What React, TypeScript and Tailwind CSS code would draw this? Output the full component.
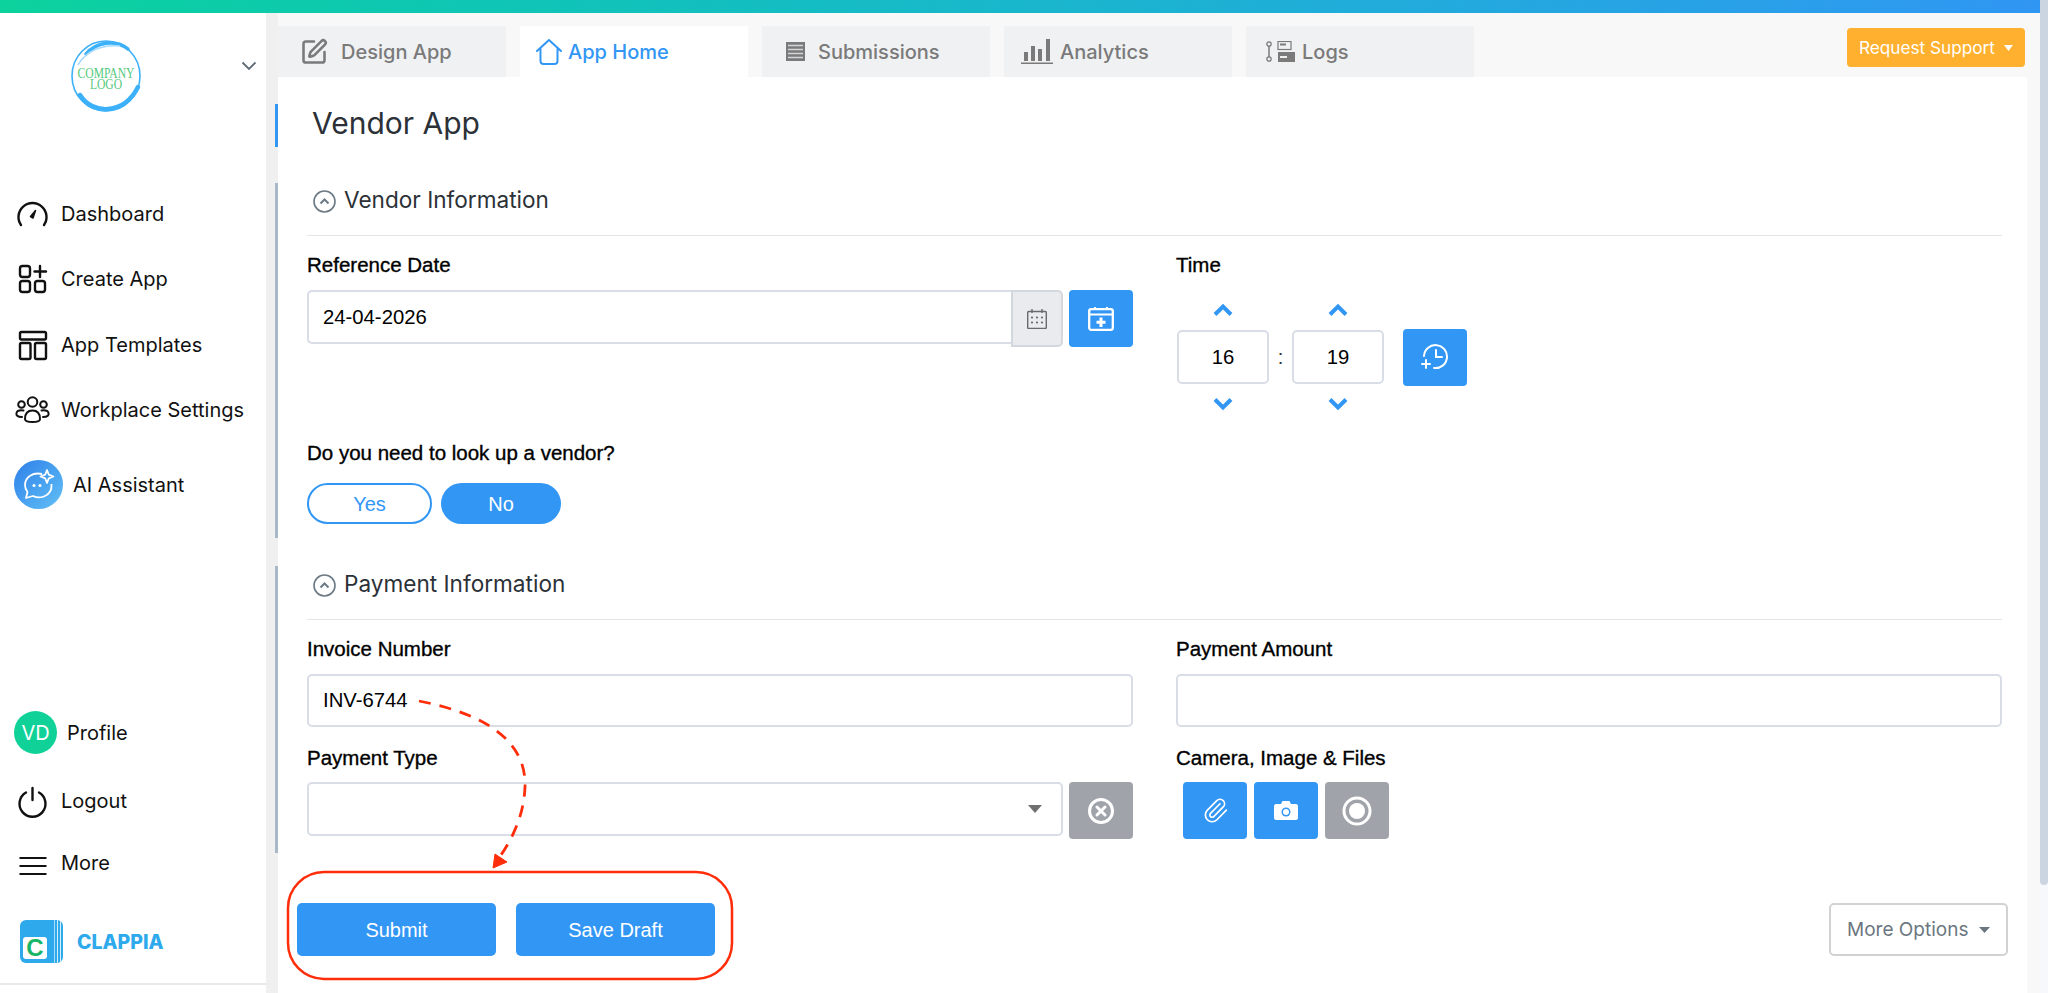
import React from "react";
import { SquarePen, Paperclip } from "lucide-react";

const helv = "font-['Liberation_Sans',Arial,sans-serif]";

function Chevron({ up }: { up?: boolean }) {
  return (
    <svg width="20" height="14" viewBox="0 0 20 14" fill="none" stroke="#3296f5" strokeWidth="4">
      <path d={up ? "M2 11.5 L10 3.5 L18 11.5" : "M2 2.5 L10 10.5 L18 2.5"} />
    </svg>
  );
}

function Caret({ color, w = 14, h = 8 }: { color: string; w?: number; h?: number }) {
  return (
    <svg width={w} height={h} viewBox="0 0 14 8" preserveAspectRatio="none" className="shrink-0">
      <path d="M0 0 H14 L7 8 Z" fill={color} />
    </svg>
  );
}

function NavIcon({ children }: { children: React.ReactNode }) {
  return (
    <svg width="32" height="32" viewBox="0 0 32 32" fill="none" stroke="#111" strokeWidth="2.4" strokeLinecap="round" strokeLinejoin="round" className="overflow-visible shrink-0">
      {children}
    </svg>
  );
}

function NavRow({ icon, label, className }: { icon: React.ReactNode; label: string; className: string }) {
  return (
    <div className={`flex items-center pl-[17px] gap-[12px] text-[20px] text-[#111] ${className}`}>
      {icon}
      <span>{label}</span>
    </div>
  );
}

function Sidebar() {
  return (
    <aside className="w-[266px] shrink-0 bg-white flex flex-col">
      {/* logo block */}
      <div className="h-[168px] relative">
        <div className="flex items-start pl-[70px] pt-[26px]">
          <svg width="74" height="74" viewBox="0 0 74 74" fill="none">
            <ellipse cx="36" cy="37" rx="34" ry="35" stroke="#3cb0f8" strokeWidth="1.6" />
            <path d="M10 56 C22 76 54 76 68 48" stroke="#3cb0f8" strokeWidth="4.5" strokeLinecap="round" />
            <path d="M16 15 C26 3 46 0 58 10" stroke="#3cb0f8" strokeWidth="3.5" strokeLinecap="round" />
            <path d="M8 26 C16 12 32 5 50 7" stroke="#a5dafb" strokeWidth="1.5" />
            <text transform="translate(36 39) scale(0.8 1)" textAnchor="middle" fontSize="14.5" fontFamily="'Liberation Serif',serif" fill="#55c97c">COMPANY</text>
            <text transform="translate(36 50) scale(0.8 1)" textAnchor="middle" fontSize="14.5" fontFamily="'Liberation Serif',serif" fill="#55c97c">LOGO</text>
          </svg>
          <svg width="16" height="10" viewBox="0 0 16 10" fill="none" stroke="#5f6b76" strokeWidth="1.8" className="ml-[97px] mt-[22px]">
            <path d="M1.5 1.5 L8 8 L14.5 1.5" />
          </svg>
        </div>
      </div>

      <NavRow
        className="h-[65.5px]"
        label="Dashboard"
        icon={
          <NavIcon>
            <path d="M4 27 A14 14 0 1 1 27 27" />
            <path d="M13.5 18.5 L18.5 12.5 L16 20 Z" fill="#111" strokeWidth="1.5" />
          </NavIcon>
        }
      />
      <NavRow
        className="h-[65.5px]"
        label="Create App"
        icon={
          <NavIcon>
            <rect x="3" y="3" width="10" height="11" rx="2.5" />
            <rect x="3" y="18" width="10" height="11" rx="2.5" />
            <rect x="18" y="18" width="10" height="11" rx="2.5" />
            <path d="M23 3 V14 M17.5 8.5 H29" />
          </NavIcon>
        }
      />
      <NavRow
        className="h-[65.5px]"
        label="App Templates"
        icon={
          <NavIcon>
            <rect x="3" y="3" width="26" height="7.5" rx="1.5" />
            <rect x="3" y="14" width="10.5" height="16" rx="1.5" />
            <rect x="18" y="14" width="11" height="16" rx="1.5" />
          </NavIcon>
        }
      />
      <NavRow
        className="h-[65.5px]"
        label="Workplace Settings"
        icon={
          <NavIcon>
            <circle cx="15.5" cy="8" r="4.8" strokeWidth="2" />
            <circle cx="4.5" cy="10.5" r="3.3" strokeWidth="2" />
            <circle cx="26.5" cy="10.5" r="3.3" strokeWidth="2" />
            <path d="M8 25 C8 19 11 16.5 15.5 16.5 C20 16.5 23 19 23 25 C23 29 8 29 8 25 Z" strokeWidth="2" />
            <path d="M5 23 C0 23 -1 21 -0.5 19 C0 17 2.5 16 6.5 16.5" strokeWidth="2" />
            <path d="M26 23 C31 23 32 21 31.5 19 C31 17 28.5 16 24.5 16.5" strokeWidth="2" />
          </NavIcon>
        }
      />
      <div className="flex items-center pl-[14px] gap-[10px] mt-[17px] text-[20px] text-[#111]">
        <div className="w-[49px] h-[49px] rounded-full bg-gradient-to-br from-[#2f7fe8] to-[#63c0f6] flex items-center justify-center">
          <svg width="36" height="36" viewBox="0 0 36 36" fill="none" stroke="white" strokeWidth="1.8" strokeLinejoin="round">
            <path d="M21 7 C12 5 4 10 4 18 C4 21 5 23 6.5 25 L5 31 L12 29 C15 30.5 19 31 23 29.5 C28 27.5 31 23 30.5 17" />
            <path d="M26 3 L27.8 7.7 L32.5 9.5 L27.8 11.3 L26 16 L24.2 11.3 L19.5 9.5 L24.2 7.7 Z" />
            <circle cx="13" cy="18.5" r="1.5" fill="white" stroke="none" />
            <circle cx="19" cy="18.5" r="1.5" fill="white" stroke="none" />
          </svg>
        </div>
        <span>AI Assistant</span>
      </div>

      <div className="mt-auto flex flex-col">
        <div className="flex items-center pl-[14px] gap-[10px] text-[20px] text-[#111]">
          <div className="w-[43px] h-[43px] rounded-full bg-[#10d198] flex items-center justify-center text-white text-[20px]">VD</div>
          <span>Profile</span>
        </div>
        <NavRow
          className="h-[32px] mt-[31px]"
          label="Logout"
          icon={
            <NavIcon>
              <path d="M9 7.5 A13 13 0 1 0 22 7.5" />
              <path d="M15.5 3 V15" />
            </NavIcon>
          }
        />
        <NavRow
          className="h-[32px] mt-[30px]"
          label="More"
          icon={
            <NavIcon>
              <path d="M2.5 11 H29.5 M2.5 19 H29.5 M2.5 27 H29.5" strokeWidth="2" strokeLinecap="butt" />
            </NavIcon>
          }
        />
        {/* clappia brand */}
        <div className="flex items-center pl-[20px] gap-[14px] mt-[41px]">
          <div className="w-[43px] h-[43px] rounded-[6px] bg-[#2ea9ec] relative overflow-hidden flex items-end pl-[3px] pb-[4px] shrink-0">
            <div className="absolute right-[2px] top-0 bottom-0 w-[1px] bg-white/80" />
            <div className="absolute right-[5px] top-0 bottom-0 w-[1px] bg-white/80" />
            <div className="absolute right-[8px] top-0 bottom-0 w-[1px] bg-white/60" />
            <div className="w-[24px] h-[22px] rounded-[3px] bg-white flex items-center justify-center font-['Liberation_Sans',sans-serif] font-bold text-[24px] leading-none text-[#18b566]">C</div>
          </div>
          <span className="pt-[3px] font-extrabold text-[19.5px] text-[#2ea9ec]">CLAPPIA</span>
        </div>
        <div className="h-[2px] bg-[#e8e8e8] mt-[20px] mb-[8px]" />
      </div>
    </aside>
  );
}

const tabs = [
  {
    label: "Design App",
    cls: "bg-[#f0f1f3] text-[#7a7a7a] w-[228px] pl-[22px] gap-[13px]",
    icon: <SquarePen size={28} strokeWidth={2.2} color="#7a7a7a" />,
  },
  {
    label: "App Home",
    cls: "bg-white text-[#3296f5] w-[228px] pl-[16px] gap-[6px]",
    icon: (
      <svg width="26" height="26" viewBox="0 0 26 26" fill="none" stroke="#3296f5" strokeWidth="2" strokeLinecap="round" strokeLinejoin="round">
        <path d="M1 12 L13 1 L25 12 M4.5 10 V22 C4.5 24 5.5 25 7.5 25 H18.5 C20.5 25 21.5 24 21.5 22 V10" />
      </svg>
    ),
  },
  {
    label: "Submissions",
    cls: "bg-[#f0f1f3] text-[#7a7a7a] w-[228px] pl-[24px] gap-[13px]",
    icon: (
      <svg width="19" height="19" viewBox="0 0 19 19">
        <rect width="19" height="19" fill="#7a7a7a" />
        <path d="M2 3.5 H17 M2 7.5 H17 M2 11.5 H17 M2 15.5 H17" stroke="#d5d6d8" strokeWidth="1.5" />
      </svg>
    ),
  },
  {
    label: "Analytics",
    cls: "bg-[#f0f1f3] text-[#7a7a7a] w-[228px] pl-[17px] gap-[7px]",
    icon: (
      <svg width="32" height="25" viewBox="0 0 32 25" fill="#7a7a7a">
        <rect x="3" y="13" width="4" height="9" />
        <rect x="10" y="7" width="4" height="15" />
        <rect x="17" y="10" width="4" height="12" />
        <rect x="25" y="0" width="4" height="22" />
        <rect x="0" y="23.5" width="32" height="1.5" />
      </svg>
    ),
  },
  {
    label: "Logs",
    cls: "bg-[#f0f1f3] text-[#7a7a7a] w-[228px] pl-[20px] gap-[7px]",
    icon: (
      <svg width="29" height="21" viewBox="0 0 29 21" fill="none">
        <circle cx="3" cy="3" r="2.2" stroke="#7a7a7a" strokeWidth="1.3" />
        <circle cx="3" cy="18" r="2.2" stroke="#7a7a7a" strokeWidth="1.3" />
        <path d="M3 5 V16" stroke="#7a7a7a" strokeWidth="1.5" />
        <rect x="12" y="0.5" width="13" height="8" fill="none" stroke="#7a7a7a" strokeWidth="1.2" />
        <path d="M14 3.5 H20" stroke="#7a7a7a" strokeWidth="2" />
        <rect x="12" y="11" width="17" height="10" fill="#7a7a7a" />
        <path d="M14 16 H21" stroke="#eee" strokeWidth="2" />
      </svg>
    ),
  },
];

function SectionHeader({ title }: { title: string }) {
  return (
    <div className="h-[50px] border-b border-[#e2e4e8] flex items-start pl-[6px] gap-[8px]">
      <svg width="23" height="23" viewBox="0 0 23 23" fill="none" stroke="#6c7a86" strokeWidth="1.6" className="mt-[4px] shrink-0">
        <circle cx="11.5" cy="11.5" r="10.5" />
        <path d="M7.5 13.5 L11.5 9.5 L15.5 13.5" strokeWidth="2" />
      </svg>
      <span className="text-[22.6px] leading-[28px] text-[#2c3138]">{title}</span>
    </div>
  );
}

function FieldLabel({ children }: { children: React.ReactNode }) {
  return <div className={`${helv} text-[20.5px] leading-[24px] text-black [-webkit-text-stroke:0.35px_black]`}>{children}</div>;
}

function BlueButton({ children, className }: { children: React.ReactNode; className: string }) {
  return <div className={`w-[64px] h-[57px] rounded-[4px] flex items-center justify-center shrink-0 ${className}`}>{children}</div>;
}

function TimeBox({ value }: { value: string }) {
  return (
    <div className="w-[92px] h-[134px] flex flex-col items-center justify-between">
      <div className="h-[40px] flex items-center justify-center"><Chevron up /></div>
      <div className={`${helv} w-[92px] h-[54px] border-2 border-[#d8dde6] rounded-[5px] flex items-center justify-center text-[20.3px] text-black`}>{value}</div>
      <div className="h-[40px] flex items-center justify-center"><Chevron /></div>
    </div>
  );
}

function Annotation() {
  return (
    <svg width="2048" height="993" viewBox="0 0 2048 993" fill="none" className="absolute left-0 top-0 pointer-events-none">
      <rect x="288" y="872" width="444" height="107" rx="36" stroke="#ff2d0a" strokeWidth="2.5" />
      <path d="M419 701 C470 711 527 733 525 787 C524 813 514 836 501 855" stroke="#ff2d0a" strokeWidth="2.8" strokeDasharray="12 9" />
      <path d="M493 868 L495 854 L507 862 Z" fill="#ff2d0a" stroke="#ff2d0a" strokeWidth="1" />
    </svg>
  );
}

export default function App() {
  return (
    <div className="relative w-[2048px] h-[993px] overflow-hidden flex bg-white font-['Inter',sans-serif]">
      <div className="flex-1 flex flex-col min-w-0">
        <div className="h-[13px] shrink-0 bg-gradient-to-r from-[#0cd29d] to-[#3096f3]" />
        <div className="flex-1 flex min-h-0">
          <Sidebar />

          {/* gutter with the section markers */}
          <div className="w-[12px] shrink-0 bg-[#f0f0f0] flex flex-col items-end">
            <div className="w-[3px] h-[43px] mt-[91px] bg-[#3296f5]" />
            <div className="w-[3px] h-[355px] mt-[36px] bg-[#a9b8c6]" />
            <div className="w-[3px] h-[287px] mt-[28px] bg-[#a9b8c6]" />
          </div>

          <main className="flex-1 flex flex-col bg-[#f8f8f8] min-w-0">
            <div className="h-[64px] shrink-0 flex items-start pr-[15px]">
              <div className="flex gap-[14px] pt-[13px]">
                {tabs.map((t) => (
                  <div key={t.label} className={`h-[51px] flex items-center text-[20px] font-medium ${t.cls}`}>
                    {t.icon}
                    <span>{t.label}</span>
                  </div>
                ))}
              </div>
              <div className="ml-auto mt-[15px] w-[178px] h-[39px] rounded-[4px] bg-[#ffb02e] text-white text-[17.2px] flex items-center pl-[12px] gap-[9px]">
                <span>Request Support</span>
                <Caret color="white" w={9} h={6} />
              </div>
            </div>

            <div className="flex-1 mr-[13px] bg-white pl-[29px] pr-[25px] pt-[28px]">
              <h1 className="ml-[5px] text-[30px] leading-[36px] text-[#2c3138]">Vendor App</h1>

              <div className="mt-[45px]">
                <SectionHeader title="Vendor Information" />
              </div>
              <div className="grid grid-cols-2 gap-x-[43px] pt-[17px]">
                <div>
                  <FieldLabel>Reference Date</FieldLabel>
                  <div className="flex mt-[13px]">
                    <div className={`${helv} flex-1 h-[54px] border-2 border-r-0 border-[#d8dde6] rounded-l-[5px] flex items-center pl-[14px] pt-[1px] text-[20.3px] text-black`}>24-04-2026</div>
                    <div className="w-[52px] h-[57px] border-2 border-[#d3d7de] bg-[#e9ebef] rounded-r-[5px] flex items-center justify-center">
                      <svg width="20" height="20" viewBox="0 0 20 20" fill="none" stroke="#6a6a6a" strokeWidth="1.4">
                        <rect x="0.7" y="2.5" width="18.6" height="17" rx="1" />
                        <path d="M5 0 V4 M15 0 V4" />
                        <g fill="#6a6a6a" stroke="none">
                          <circle cx="5" cy="8.5" r="1.1" /><circle cx="10" cy="8.5" r="1.1" /><circle cx="15" cy="8.5" r="1.1" />
                          <circle cx="5" cy="13.5" r="1.1" /><circle cx="10" cy="13.5" r="1.1" /><circle cx="15" cy="13.5" r="1.1" />
                        </g>
                      </svg>
                    </div>
                    <BlueButton className="ml-[6px] bg-[#3296f5]">
                      <svg width="26" height="24" viewBox="0 0 26 24" fill="none" stroke="white" strokeWidth="2.3">
                        <rect x="1.2" y="2.2" width="23.6" height="20.6" rx="2" />
                        <path d="M1 7.5 H25 M7 0 V3 M19 0 V3" strokeWidth="2" />
                        <path d="M13 10.5 V20 M8.5 15.2 H17.5" strokeWidth="3" />
                      </svg>
                    </BlueButton>
                  </div>
                </div>
                <div>
                  <FieldLabel>Time</FieldLabel>
                  <div className="flex items-center mt-[13px] pl-[1px]">
                    <TimeBox value="16" />
                    <div className={`${helv} w-[23px] text-center text-[20px] text-[#333]`}>:</div>
                    <TimeBox value="19" />
                    <BlueButton className="ml-[19px] bg-[#3296f5]">
                      <svg width="28" height="26" viewBox="0 0 28 26" fill="none" stroke="white" strokeWidth="2" strokeLinecap="round">
                        <path d="M3 12 A11.5 11.5 0 1 1 13 24" />
                        <path d="M15 6 V13 H21 M1 20 H9 M5 16 V24" />
                      </svg>
                    </BlueButton>
                  </div>
                </div>
              </div>

              <div className="mt-[17px]">
                <FieldLabel>Do you need to look up a vendor?</FieldLabel>
              </div>
              <div className={`${helv} flex gap-[9px] mt-[18px] text-[20px]`}>
                <div className="w-[125px] h-[41px] rounded-full border-2 border-[#3296f5] text-[#3296f5] flex items-center justify-center">Yes</div>
                <div className="w-[120px] h-[41px] rounded-full bg-[#3296f5] text-white flex items-center justify-center">No</div>
              </div>

              <div className="mt-[46px]">
                <SectionHeader title="Payment Information" />
              </div>
              <div className="grid grid-cols-2 gap-x-[43px] pt-[17px]">
                <div>
                  <FieldLabel>Invoice Number</FieldLabel>
                  <div className={`${helv} mt-[13px] h-[53px] border-2 border-[#d8dde6] rounded-[5px] flex items-center pl-[14px] text-[20.3px] text-black`}>INV-6744</div>
                </div>
                <div>
                  <FieldLabel>Payment Amount</FieldLabel>
                  <div className="mt-[13px] h-[53px] border-2 border-[#d8dde6] rounded-[5px]" />
                </div>
                <div className="mt-[19px]">
                  <FieldLabel>Payment Type</FieldLabel>
                  <div className="flex mt-[12px] gap-[6px]">
                    <div className="flex-1 h-[54px] border-2 border-[#d8dde6] rounded-[5px] flex items-center justify-end pr-[19px]">
                      <Caret color="#707070" />
                    </div>
                    <BlueButton className="bg-[#a0a4aa]">
                      <svg width="26" height="26" viewBox="0 0 26 26" fill="none" stroke="white" strokeWidth="3" strokeLinecap="round">
                        <circle cx="13" cy="13" r="11.5" />
                        <path d="M9 9 L17 17 M17 9 L9 17" />
                      </svg>
                    </BlueButton>
                  </div>
                </div>
                <div className="mt-[19px]">
                  <FieldLabel>Camera, Image &amp; Files</FieldLabel>
                  <div className="flex mt-[12px] pl-[7px] gap-[7px]">
                    <BlueButton className="bg-[#3296f5]">
                      <Paperclip size={27} strokeWidth={1.5} color="white" />
                    </BlueButton>
                    <BlueButton className="bg-[#3296f5]">
                      <svg width="24" height="19" viewBox="0 0 24 19">
                        <path d="M2 3 H7 L8.5 0 H15.5 L17 3 H22 C23 3 24 4 24 5 V17 C24 18 23 19 22 19 H2 C1 19 0 18 0 17 V5 C0 4 1 3 2 3 Z" fill="white" />
                        <circle cx="12" cy="11" r="4.5" fill="#3296f5" />
                        <circle cx="12" cy="11" r="3" fill="white" />
                      </svg>
                    </BlueButton>
                    <BlueButton className="bg-[#a0a4aa]">
                      <svg width="30" height="30" viewBox="0 0 30 30" fill="none">
                        <circle cx="15" cy="15" r="13" stroke="white" strokeWidth="3" />
                        <circle cx="15" cy="15" r="8" fill="white" />
                      </svg>
                    </BlueButton>
                  </div>
                </div>
              </div>

              <div className="flex items-start mt-[64px] -ml-[10px] -mr-[6px]">
                <div className={`${helv} w-[199px] h-[53px] rounded-[5px] bg-[#3296f5] text-white text-[20px] flex items-center justify-center`}>Submit</div>
                <div className={`${helv} w-[199px] h-[53px] ml-[20px] rounded-[5px] bg-[#3296f5] text-white text-[20px] flex items-center justify-center`}>Save Draft</div>
                <div className="ml-auto w-[179px] h-[53px] rounded-[5px] border-2 border-[#d2d2d2] text-[#6b7780] text-[19px] flex items-center pl-[16px] pt-[1px] gap-[11px]">
                  <span>More Options</span>
                  <Caret color="#6b7780" w={11} h={6} />
                </div>
              </div>
            </div>
          </main>
        </div>
      </div>

      {/* page scrollbar */}
      <div className="w-[8px] shrink-0 bg-[#f6f8fc]">
        <div className="h-[885px] bg-[#cbd5e2] rounded-b-[4px]" />
      </div>

      <Annotation />
    </div>
  );
}
